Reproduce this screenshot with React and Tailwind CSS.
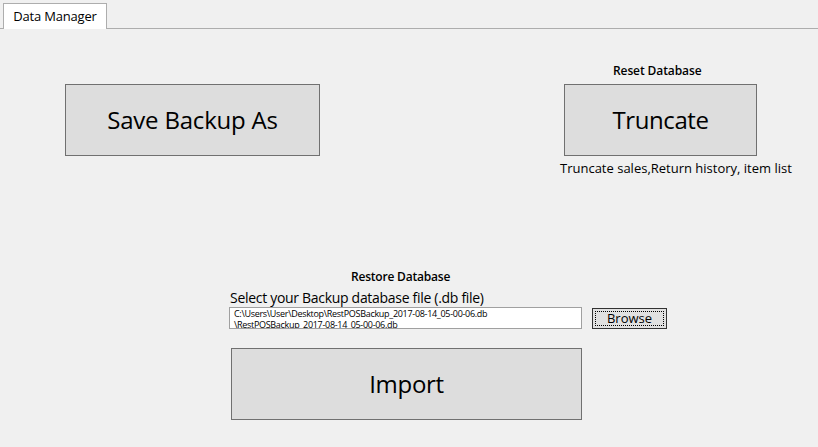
import React from 'react';

const font = { fontFamily: '"Open Sans", "Noto Sans", sans-serif' };

function WinButton({ className, children }) {
  return (
    <button
      className={`bg-[#dddddd] border border-[#707070] text-black flex items-center justify-center ${className}`}
    >
      {children}
    </button>
  );
}

export default function App() {
  return (
    <div className="w-[818px] h-[447px] bg-[#f0f0f0] overflow-hidden text-black" style={font}>
      {/* Tab strip */}
      <div className="h-[29px] border-b border-[#adadad] flex items-end pl-[3px]">
        <div className="bg-white border border-b-0 border-[#adadad] h-[26px] w-[104px] -mb-px flex items-center justify-center text-[13px] tracking-[-0.2px]">
          Data Manager
        </div>
      </div>

      {/* Backup / Truncate */}
      <div className="flex">
        <div className="ml-[65px] mt-[55px]">
          <WinButton className="w-[255px] h-[72px] text-[24px] tracking-[-0.2px]">Save Backup As</WinButton>
        </div>
        <div className="ml-[240px] mt-[33px] flex flex-col">
          <div className="ml-[53px] h-[22px] text-[12px] font-semibold tracking-[-0.1px]">Reset Database</div>
          <WinButton className="ml-[4px] w-[193px] h-[72px] text-[24px] tracking-[-0.4px]">Truncate</WinButton>
          <div className="mt-[3px] text-[13px] whitespace-nowrap">Truncate sales,Return history, item list</div>
        </div>
      </div>

      {/* Restore */}
      <div className="ml-[229px] mt-[90px] flex flex-col">
        <div className="ml-[122px] text-[12px] font-semibold tracking-[-0.2px] leading-[16px]">Restore Database</div>
        <div className="ml-[1px] mt-[4px] text-[14px] tracking-[-0.3px] leading-[18px]">Select your Backup database file (.db file)</div>
        <div className="flex items-start">
          <div className="w-[353px] h-[22px] bg-white border border-[#a0a0a0] overflow-hidden pl-[4px] text-[9px] leading-[11px] tracking-[-0.3px]">
            <div>C:\Users\User\Desktop\RestPOSBackup_2017-08-14_05-00-06.db</div>
            <div>\RestPOSBackup_2017-08-14_05-00-06.db</div>
          </div>
          <div className="ml-[10px] mt-[1px] w-[75px] h-[21px] bg-[#e1e1e1] border border-[#333333] p-[2px]">
            <div className="w-full h-full border border-dotted border-black flex items-center justify-center text-[13px] leading-none">
              Browse
            </div>
          </div>
        </div>
        <WinButton className="ml-[2px] mt-[19px] w-[351px] h-[72px] text-[24px] tracking-[-0.3px]">Import</WinButton>
      </div>
    </div>
  );
}
